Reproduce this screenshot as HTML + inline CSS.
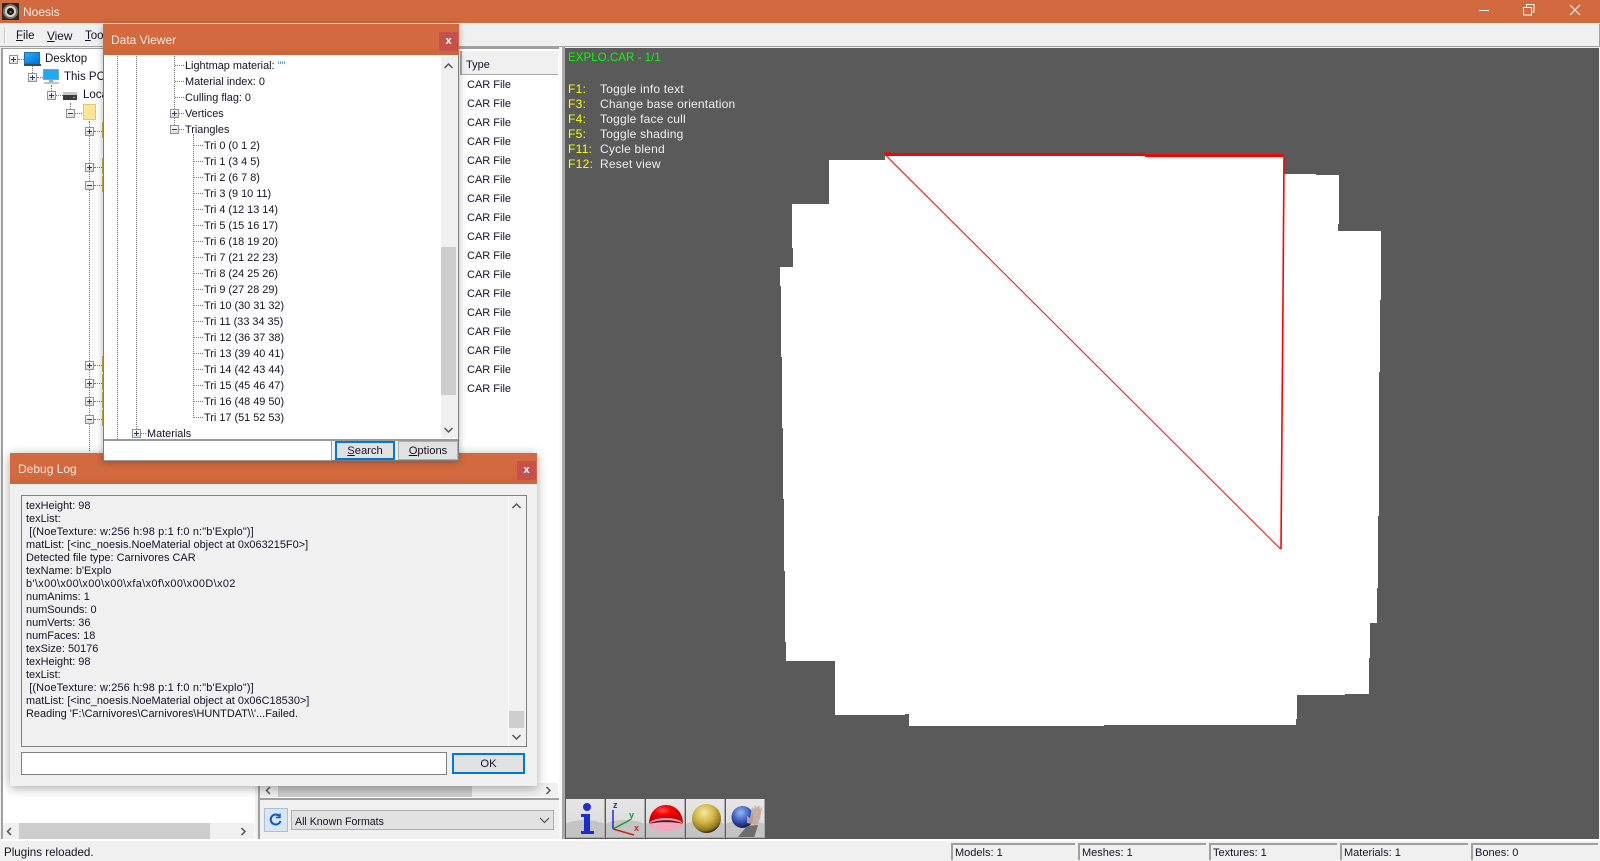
<!DOCTYPE html>
<html><head><meta charset="utf-8"><title>Noesis</title>
<style>
html,body{margin:0;padding:0}
body{width:1600px;height:860px;overflow:hidden;position:relative;background:#f0f0f0;font-family:"Liberation Sans",sans-serif;font-size:10.9px;color:#161126}
.a,.t,.b,.pm,.v,.h,.r{position:absolute;box-sizing:border-box}
.t{white-space:pre;line-height:16px;height:16px;margin-top:1px}
.v{width:1px;border-left:1px dotted #777}
.h{height:1px;border-top:1px dotted #777}
.pm{width:9px;height:9px;border:1px solid #8f939c;background:linear-gradient(#fff,#dcdcdc)}
.pm:before{content:"";position:absolute;left:1px;top:3px;width:5px;height:1px;background:#2b3a6b}
.pm.p:after{content:"";position:absolute;left:3px;top:1px;width:1px;height:5px;background:#2b3a6b}
.r{left:467px;font-size:11px;width:80px;line-height:16px;height:16px;white-space:pre}
.tri{left:204px}
.log{left:26px;line-height:13px;height:13px;font-size:10.95px}
.btn{background:#e1e1e1;border:1px solid #adadad;text-align:center;line-height:19px;font-size:11.2px}
.blue{border:2px solid #0078d7;line-height:17px}
.ttl{background:linear-gradient(#d2693f,#d2693f 70%,#cc653c);color:#f6e9e2;font-size:12px}
.x{background:#c4514c;color:#fff;text-align:center;font-weight:bold;font-size:11px}
.st{top:843px;height:17px;border-top:2px solid #a0a0a0;border-left:2px solid #a0a0a0;padding-left:2px;line-height:16px;font-size:11px;white-space:pre}
.k{left:568px;color:#ff0;font-size:12px;letter-spacing:.3px;margin-top:0}
.d{left:600px;color:#f0f0f0;font-size:12px;letter-spacing:.2px;margin-top:0}
.tb{top:799px;width:39px;height:39px;background:linear-gradient(#e6e6e6,#d8d8d8);border-right:1px solid #a8a8a8;border-bottom:1px solid #a8a8a8;overflow:hidden}
</style></head><body>

<!-- title bar -->
<div class="a" style="left:0;top:0;width:1600px;height:23px;background:#d2693f"></div>
<svg class="a" style="left:2px;top:3px" width="17" height="17" viewBox="0 0 17 17"><rect width="17" height="17" fill="#2b2825"/><circle cx="8.5" cy="8.5" r="7.5" fill="#77726a"/><circle cx="8.5" cy="8.5" r="5.6" fill="#d8d4cc"/><circle cx="8.5" cy="8.5" r="3.6" fill="#1c1a18"/><circle cx="8.5" cy="9" r="1" fill="#8a8a8a"/></svg>
<div class="t" style="left:23px;top:4px;color:#f8ece6;font-size:12px;margin-top:0">Noesis</div>
<div class="a" style="left:1479px;top:10px;width:10px;height:1px;background:#fff"></div>
<svg class="a" style="left:1523px;top:4px" width="12" height="12" viewBox="0 0 12 12" fill="none" stroke="#fff"><rect x=".5" y="3.5" width="8" height="7.5"/><path d="M3.5 3V.5H11V8H8.5"/></svg>
<svg class="a" style="left:1569px;top:4px" width="12" height="12" viewBox="0 0 12 12" fill="none" stroke="#fff"><path d="M1 1L11 11M11 1L1 11"/></svg>

<!-- menu -->
<div class="a" style="left:0;top:23px;width:1600px;height:1px;background:#fbf3ee"></div>
<div class="a" style="left:0;top:24px;width:1600px;height:23px;background:#f0f0f0;border-bottom:1px solid #a0a0a0;border-right:1px solid #a0a0a0"></div>
<div class="a" style="left:4px;top:27px;width:2px;height:17px;background:#c8c8c8;border-right:1px solid #fff"></div>
<div class="t" style="left:16px;top:27px;font-size:11.5px"><u>F</u>ile</div>
<div class="t" style="left:47px;top:27px;font-size:11.8px"><u>V</u>iew</div>
<div class="t" style="left:85px;top:27px;font-size:11.5px"><u>T</u>ools</div>

<!-- left tree panel -->
<div class="a" style="left:1px;top:48px;width:254px;height:791px;background:#fff;border-left:2px solid #a0a0a0;border-top:1px solid #a0a0a0"></div>
<div class="pm p" style="left:9px;top:55px"></div>
<div class="h" style="left:18px;top:59px;width:6px"></div>
<svg class="a" style="left:24px;top:52px" width="17" height="14"><defs><linearGradient id="dk" x1="0" y1="0" x2="1" y2="1"><stop offset="0" stop-color="#2ab0f5"/><stop offset="1" stop-color="#0070d8"/></linearGradient></defs><rect x=".5" y=".5" width="15" height="11" fill="url(#dk)" stroke="#1f6fb8"/><rect x="0" y="12" width="17" height="2" fill="#3a4a58"/></svg>
<div class="t" style="left:45px;top:50px;font-size:11.5px">Desktop</div>
<div class="v" style="left:32px;top:66px;height:7px"></div>
<div class="pm p" style="left:28px;top:73px"></div>
<div class="h" style="left:37px;top:77px;width:6px"></div>
<svg class="a" style="left:43px;top:69px" width="17" height="16"><rect x=".5" y=".5" width="15" height="10" fill="#22a7f0" stroke="#6aa9d4"/><rect x="6" y="11" width="4" height="2" fill="#9ab"/><rect x="1" y="13" width="15" height="2" fill="#b9c4cc"/></svg>
<div class="t" style="left:64px;top:68px;font-size:11.5px">This PC</div>
<div class="v" style="left:51px;top:85px;height:6px"></div>
<div class="pm p" style="left:47px;top:91px"></div>
<div class="h" style="left:56px;top:95px;width:7px"></div>
<svg class="a" style="left:63px;top:92px" width="15" height="9"><rect y="0" width="14" height="3" fill="#c8c8c8"/><rect y="3" width="14" height="5" fill="#3b3b3b"/><rect x="10" y="5" width="2" height="1" fill="#3f3"/></svg>
<div class="t" style="left:83px;top:86px;font-size:11.5px">Local Disk</div>
<div class="v" style="left:70px;top:103px;height:6px"></div>
<div class="pm" style="left:66px;top:109px"></div>
<div class="h" style="left:75px;top:113px;width:7px"></div>
<div class="a" style="left:83px;top:104px;width:13px;height:16px;background:#fde796;border:1px solid #e4c76e"></div>
<div class="v" style="left:89px;top:121px;height:330px"></div>
<div class="pm p" style="left:85px;top:127px"></div><div class="h" style="left:94px;top:131px;width:8px"></div><div class="a" style="left:102px;top:122px;width:2px;height:16px;background:#d9b64c"></div>
<div class="pm p" style="left:85px;top:163px"></div><div class="h" style="left:94px;top:167px;width:8px"></div><div class="a" style="left:102px;top:158px;width:2px;height:16px;background:#d9b64c"></div>
<div class="pm" style="left:85px;top:181px"></div><div class="h" style="left:94px;top:185px;width:8px"></div><div class="a" style="left:102px;top:176px;width:2px;height:16px;background:#d9b64c"></div>
<div class="pm p" style="left:85px;top:361px"></div><div class="h" style="left:94px;top:365px;width:8px"></div><div class="a" style="left:102px;top:356px;width:2px;height:16px;background:#d9b64c"></div>
<div class="pm p" style="left:85px;top:379px"></div><div class="h" style="left:94px;top:383px;width:8px"></div><div class="a" style="left:102px;top:374px;width:2px;height:16px;background:#d9b64c"></div>
<div class="pm p" style="left:85px;top:397px"></div><div class="h" style="left:94px;top:401px;width:8px"></div><div class="a" style="left:102px;top:392px;width:2px;height:16px;background:#d9b64c"></div>
<div class="pm" style="left:85px;top:415px"></div><div class="h" style="left:94px;top:419px;width:8px"></div><div class="a" style="left:102px;top:410px;width:2px;height:16px;background:#d9b64c"></div>
<!-- left hscroll -->
<div class="a" style="left:3px;top:823px;width:251px;height:16px;background:#f0f0f0"></div>
<div class="a" style="left:19px;top:823px;width:191px;height:16px;background:#cdcdcd"></div>
<svg class="a" style="left:6px;top:827px" width="7" height="9" fill="none" stroke="#555" stroke-width="1.5"><path d="M5 1L1.5 4.5L5 8"/></svg>
<svg class="a" style="left:240px;top:827px" width="7" height="9" fill="none" stroke="#555" stroke-width="1.5"><path d="M1.5 1L5 4.5L1.5 8"/></svg>

<!-- right list panel -->
<div class="a" style="left:258px;top:47px;width:301px;height:751px;background:#fff;border-left:2px solid #a0a0a0;border-top:2px solid #a0a0a0"></div>
<div class="a" style="left:460px;top:51px;width:98px;height:24px;background:#f0f0f0;border-left:2px solid #a8a8a8;border-bottom:1px solid #a8a8a8"></div>
<div class="t" style="left:466px;top:56px;font-size:11px">Type</div>
<div class="r" style="top:77px">CAR File</div>
<div class="r" style="top:96px">CAR File</div>
<div class="r" style="top:115px">CAR File</div>
<div class="r" style="top:134px">CAR File</div>
<div class="r" style="top:153px">CAR File</div>
<div class="r" style="top:172px">CAR File</div>
<div class="r" style="top:191px">CAR File</div>
<div class="r" style="top:210px">CAR File</div>
<div class="r" style="top:229px">CAR File</div>
<div class="r" style="top:248px">CAR File</div>
<div class="r" style="top:267px">CAR File</div>
<div class="r" style="top:286px">CAR File</div>
<div class="r" style="top:305px">CAR File</div>
<div class="r" style="top:324px">CAR File</div>
<div class="r" style="top:343px">CAR File</div>
<div class="r" style="top:362px">CAR File</div>
<div class="r" style="top:381px">CAR File</div>
<div class="a" style="left:260px;top:783px;width:298px;height:14px;background:#f0f0f0"></div>
<div class="a" style="left:278px;top:783px;width:194px;height:14px;background:#cdcdcd"></div>
<svg class="a" style="left:265px;top:786px" width="7" height="9" fill="none" stroke="#555" stroke-width="1.5"><path d="M5 1L1.5 4.5L5 8"/></svg>
<svg class="a" style="left:545px;top:786px" width="7" height="9" fill="none" stroke="#555" stroke-width="1.5"><path d="M1.5 1L5 4.5L1.5 8"/></svg>
<!-- combo row -->
<div class="a" style="left:258px;top:798px;width:301px;height:41px;background:#f0f0f0;border-left:2px solid #a0a0a0;border-top:2px solid #a0a0a0"></div>
<div class="a" style="left:264px;top:808px;width:24px;height:24px;background:#d8e6f4;border:1px solid #a9bfd6"></div>
<svg class="a" style="left:269px;top:813px" width="14" height="14" fill="none" stroke="#0b57c4" stroke-width="2"><path d="M10.5 3.2A5 5 0 1 0 11.5 8"/><path d="M11 .5V4.5H7" stroke-width="1.4"/></svg>
<div class="a" style="left:291px;top:810px;width:263px;height:20px;background:#e1e1e1;border:1px solid #adadad"></div>
<div class="t" style="left:295px;top:813px;font-size:10.6px">All Known Formats</div>
<svg class="a" style="left:539px;top:817px" width="11" height="7" fill="none" stroke="#444"><path d="M1 1L5.5 5.5L10 1"/></svg>

<!-- viewport -->
<div class="a" style="left:559px;top:47px;width:6px;height:792px;background:#f8f8f8"></div>
<div class="a" style="left:562px;top:47px;width:3px;height:792px;background:#a8a8a8"></div>
<div class="a" style="left:565px;top:48px;width:1034px;height:791px;background:#5a5a5a"></div>
<svg class="a" style="left:0;top:0" width="1600" height="860">
<polygon fill="#fff" points="885,155 1284,155 1284,174 1316,174 1316,175 1339,175 1339,224 1338,224 1338,231 1381,231 1381,300 1380,300 1380,372 1379,372 1379,516 1378,516 1378,588 1377,588 1377,623 1370,623 1370,658 1369,658 1369,694 1345,694 1345,695 1297,695 1297,719 1296,719 1296,725 1104,725 1104,726 909,726 909,714 905,714 905,715 835,715 835,661 786,661 786,642 785,642 785,571 784,571 784,499 783,499 783,428 782,428 782,357 781,357 781,286 780,286 780,267 793,267 793,248 792,248 792,204 829,204 829,160 885,160"/>
<path fill="#f00" d="M885 152H890V153H1145V154H1284V157H1145V156H885Z"/>
<path d="M885.5 155L1280.5 549" stroke="#f00" stroke-width="1" fill="none"/>
<path d="M1284 157L1283 300L1282 420L1281 549" stroke="#f00" stroke-width="1.6" fill="none"/>
</svg>
<div class="t" style="left:568px;top:50px;color:#0f0;font-size:11.6px;margin-top:0">EXPLO.CAR - 1/1</div>
<div class="t k" style="top:81px">F1:</div><div class="t d" style="top:81px">Toggle info text</div>
<div class="t k" style="top:96px">F3:</div><div class="t d" style="top:96px">Change base orientation</div>
<div class="t k" style="top:111px">F4:</div><div class="t d" style="top:111px">Toggle face cull</div>
<div class="t k" style="top:126px">F5:</div><div class="t d" style="top:126px">Toggle shading</div>
<div class="t k" style="top:141px">F11:</div><div class="t d" style="top:141px">Cycle blend</div>
<div class="t k" style="top:156px">F12:</div><div class="t d" style="top:156px">Reset view</div>

<!-- toolbar -->
<div class="a" style="left:565px;top:799px;width:201px;height:40px;background:#5a5a5a"></div>
<div class="a tb" style="left:566px"><svg width="39" height="39"><ellipse cx="19" cy="38" rx="30" ry="17" fill="#c4c4c4"/><circle cx="21" cy="8" r="4" fill="#1f2fd0"/><path d="M15 15H24V32H28V35H15V32H18V18H15Z" fill="#1c2ccc"/></svg></div>
<div class="a tb" style="left:606px"><svg width="39" height="39"><ellipse cx="19" cy="38" rx="30" ry="17" fill="#c4c4c4"/><path d="M7 11V30" stroke="#1c2ccc" stroke-width="1.5"/><path d="M7 30L24 21" stroke="#1a9a2a" stroke-width="1.5"/><path d="M7 30L28 36" stroke="#cc2222" stroke-width="1.5"/><text x="7" y="9" font-size="9" font-weight="bold" fill="#1c2ccc">z</text><text x="23" y="19" font-size="9" font-weight="bold" fill="#1a9a2a">y</text><text x="28" y="32" font-size="9" font-weight="bold" fill="#cc2222">x</text></svg></div>
<div class="a tb" style="left:646px"><svg width="39" height="39"><defs><radialGradient id="rd" cx=".4" cy=".3"><stop offset="0" stop-color="#f55"/><stop offset=".5" stop-color="#f00"/><stop offset="1" stop-color="#c00"/></radialGradient></defs><ellipse cx="19" cy="38" rx="30" ry="17" fill="#c4c4c4"/><path d="M3 24C4 0 36 0 37 24Z" fill="url(#rd)"/><ellipse cx="20" cy="25.5" rx="17" ry="6.5" fill="#f3a6bf"/><path d="M3 25C8 20 32 20 37 25C30 22.5 10 22.5 3 25Z" fill="#511"/></svg></div>
<div class="a tb" style="left:686px"><svg width="39" height="39"><defs><radialGradient id="gd" cx=".42" cy=".3" r=".72"><stop offset="0" stop-color="#f5e9a0"/><stop offset=".5" stop-color="#d0b040"/><stop offset=".85" stop-color="#8a7420"/><stop offset="1" stop-color="#201800"/></radialGradient></defs><ellipse cx="19" cy="38" rx="30" ry="17" fill="#c4c4c4"/><circle cx="20.5" cy="19.5" r="14.5" fill="url(#gd)"/></svg></div>
<div class="a tb" style="left:726px"><svg width="39" height="39"><defs><radialGradient id="bl" cx=".42" cy=".3" r=".72"><stop offset="0" stop-color="#9ab8f0"/><stop offset=".55" stop-color="#3a5cc0"/><stop offset="1" stop-color="#101838"/></radialGradient></defs><ellipse cx="19" cy="38" rx="30" ry="17" fill="#c4c4c4"/><circle cx="16.5" cy="18" r="11" fill="url(#bl)"/><path d="M21 24L21 17L24 19L26 8L28 10L29 6L31 9L33 6L34 10L36 8L34 20L31 26Z" fill="#c8a898" opacity=".9"/><path d="M11 39L21 27L32 26L28 39Z" fill="#6d6d6d"/></svg></div>

<!-- status bar -->
<div class="a" style="left:0;top:839px;width:1600px;height:2px;background:#fff"></div>
<div class="t" style="left:4px;top:844px;font-size:11.6px">Plugins reloaded.</div>
<div class="a st" style="left:951px;width:124px">Models: 1</div>
<div class="a st" style="left:1078px;width:128px">Meshes: 1</div>
<div class="a st" style="left:1209px;width:128px">Textures: 1</div>
<div class="a st" style="left:1340px;width:128px">Materials: 1</div>
<div class="a st" style="left:1471px;width:127px">Bones: 0</div>

<!-- Debug Log window -->
<div class="a" style="left:10px;top:453px;width:527px;height:333px;background:#f0f0f0;box-shadow:0 2px 10px rgba(0,0,0,.35)"></div>
<div class="a ttl" style="left:10px;top:453px;width:527px;height:31px"></div>
<div class="t" style="left:18px;top:461px;color:#f6e9e2;font-size:12px;margin-top:0">Debug Log</div>
<div class="a x" style="left:517px;top:461px;width:19px;height:19px;line-height:18px">x</div>
<div class="a" style="left:21px;top:495px;width:506px;height:252px;border:1px solid #808080;background:#f0f0f0"></div>
<div class="a" style="left:508px;top:496px;width:18px;height:250px;background:#f0f0f0;border-left:1px solid #fff"></div>
<div class="a" style="left:509px;top:711px;width:15px;height:17px;background:#cdcdcd"></div>
<svg class="a" style="left:511px;top:502px" width="11" height="8" fill="none" stroke="#555" stroke-width="1.5"><path d="M1.5 6L5.5 2L9.5 6"/></svg>
<svg class="a" style="left:511px;top:733px" width="11" height="8" fill="none" stroke="#555" stroke-width="1.5"><path d="M1.5 2L5.5 6L9.5 2"/></svg>
<div class="t log" style="top:499px">texHeight: 98</div>
<div class="t log" style="top:512px">texList:</div>
<div class="t log" style="top:525px;letter-spacing:.15px"> [(NoeTexture: w:256 h:98 p:1 f:0 n:"b'Explo")]</div>
<div class="t log" style="top:538px">matList: [&lt;inc_noesis.NoeMaterial object at 0x063215F0&gt;]</div>
<div class="t log" style="top:551px">Detected file type: Carnivores CAR</div>
<div class="t log" style="top:564px">texName: b'Explo</div>
<div class="t log" style="top:577px;letter-spacing:.35px">b'\x00\x00\x00\x00\xfa\x0f\x00\x00D\x02</div>
<div class="t log" style="top:590px">numAnims: 1</div>
<div class="t log" style="top:603px">numSounds: 0</div>
<div class="t log" style="top:616px">numVerts: 36</div>
<div class="t log" style="top:629px">numFaces: 18</div>
<div class="t log" style="top:642px">texSize: 50176</div>
<div class="t log" style="top:655px">texHeight: 98</div>
<div class="t log" style="top:668px">texList:</div>
<div class="t log" style="top:681px;letter-spacing:.15px"> [(NoeTexture: w:256 h:98 p:1 f:0 n:"b'Explo")]</div>
<div class="t log" style="top:694px">matList: [&lt;inc_noesis.NoeMaterial object at 0x06C18530&gt;]</div>
<div class="t log" style="top:707px">Reading 'F:\Carnivores\Carnivores\HUNTDAT\\'...Failed.</div>
<div class="a" style="left:21px;top:752px;width:426px;height:23px;background:#fff;border:1px solid #808080"></div>
<div class="a btn blue" style="left:452px;top:753px;width:73px;height:21px;line-height:19px">OK</div>

<!-- Data Viewer window -->
<div class="a" style="left:103px;top:24px;width:356px;height:437px;background:#fff;border:1px solid #7d7d7d;box-shadow:0 1px 7px rgba(0,0,0,.3)"></div>
<div class="a ttl" style="left:103px;top:24px;width:356px;height:31px"></div>
<div class="t" style="left:111px;top:32px;color:#f6e9e2;font-size:12px;margin-top:0">Data Viewer</div>
<div class="a x" style="left:439px;top:32px;width:19px;height:19px;line-height:18px">x</div>
<div class="a" style="left:441px;top:57px;width:17px;height:381px;background:#f0f0f0"></div>
<div class="a" style="left:441px;top:247px;width:15px;height:148px;background:#cdcdcd"></div>
<svg class="a" style="left:443px;top:62px" width="11" height="8" fill="none" stroke="#555" stroke-width="1.5"><path d="M1.5 6L5.5 2L9.5 6"/></svg>
<svg class="a" style="left:443px;top:426px" width="11" height="8" fill="none" stroke="#555" stroke-width="1.5"><path d="M1.5 2L5.5 6L9.5 2"/></svg>
<div class="v" style="left:117px;top:56px;height:383px"></div>
<div class="v" style="left:136px;top:56px;height:373px"></div>
<div class="v" style="left:174px;top:56px;height:69px"></div>
<div class="v" style="left:193px;top:134px;height:284px"></div>
<div class="h" style="left:175px;top:65px;width:9px"></div>
<div class="h" style="left:175px;top:81px;width:9px"></div>
<div class="h" style="left:175px;top:97px;width:9px"></div>
<div class="pm p" style="left:170px;top:109px"></div><div class="h" style="left:179px;top:113px;width:5px"></div>
<div class="pm" style="left:170px;top:125px"></div><div class="h" style="left:179px;top:129px;width:5px"></div>
<div class="pm p" style="left:132px;top:429px"></div><div class="h" style="left:141px;top:433px;width:5px"></div>
<div class="t" style="left:185px;top:57px">Lightmap material: <span style="color:#2a8ad0">""</span></div>
<div class="t" style="left:185px;top:73px">Material index: 0</div>
<div class="t" style="left:185px;top:89px">Culling flag: 0</div>
<div class="t" style="left:185px;top:105px">Vertices</div>
<div class="t" style="left:185px;top:121px">Triangles</div>
<div class="h" style="left:194px;top:145px;width:9px"></div><div class="t tri" style="top:137px">Tri 0 (0 1 2)</div>
<div class="h" style="left:194px;top:161px;width:9px"></div><div class="t tri" style="top:153px">Tri 1 (3 4 5)</div>
<div class="h" style="left:194px;top:177px;width:9px"></div><div class="t tri" style="top:169px">Tri 2 (6 7 8)</div>
<div class="h" style="left:194px;top:193px;width:9px"></div><div class="t tri" style="top:185px">Tri 3 (9 10 11)</div>
<div class="h" style="left:194px;top:209px;width:9px"></div><div class="t tri" style="top:201px">Tri 4 (12 13 14)</div>
<div class="h" style="left:194px;top:225px;width:9px"></div><div class="t tri" style="top:217px">Tri 5 (15 16 17)</div>
<div class="h" style="left:194px;top:241px;width:9px"></div><div class="t tri" style="top:233px">Tri 6 (18 19 20)</div>
<div class="h" style="left:194px;top:257px;width:9px"></div><div class="t tri" style="top:249px">Tri 7 (21 22 23)</div>
<div class="h" style="left:194px;top:273px;width:9px"></div><div class="t tri" style="top:265px">Tri 8 (24 25 26)</div>
<div class="h" style="left:194px;top:289px;width:9px"></div><div class="t tri" style="top:281px">Tri 9 (27 28 29)</div>
<div class="h" style="left:194px;top:305px;width:9px"></div><div class="t tri" style="top:297px">Tri 10 (30 31 32)</div>
<div class="h" style="left:194px;top:321px;width:9px"></div><div class="t tri" style="top:313px">Tri 11 (33 34 35)</div>
<div class="h" style="left:194px;top:337px;width:9px"></div><div class="t tri" style="top:329px">Tri 12 (36 37 38)</div>
<div class="h" style="left:194px;top:353px;width:9px"></div><div class="t tri" style="top:345px">Tri 13 (39 40 41)</div>
<div class="h" style="left:194px;top:369px;width:9px"></div><div class="t tri" style="top:361px">Tri 14 (42 43 44)</div>
<div class="h" style="left:194px;top:385px;width:9px"></div><div class="t tri" style="top:377px">Tri 15 (45 46 47)</div>
<div class="h" style="left:194px;top:401px;width:9px"></div><div class="t tri" style="top:393px">Tri 16 (48 49 50)</div>
<div class="h" style="left:194px;top:417px;width:9px"></div><div class="t tri" style="top:409px">Tri 17 (51 52 53)</div>
<div class="t" style="left:147px;top:425px">Materials</div>
<div class="a" style="left:104px;top:439px;width:354px;height:21px;background:#f0f0f0;border-top:2px solid #999"></div>
<div class="a" style="left:104px;top:441px;width:228px;height:20px;background:#fff;border-right:1px solid #999;border-bottom:1px solid #999"></div>
<div class="a btn blue" style="left:335px;top:441px;width:60px;height:19px"><u>S</u>earch</div>
<div class="a btn" style="left:398px;top:441px;width:60px;height:19px"><u>O</u>ptions</div>

</body></html>
